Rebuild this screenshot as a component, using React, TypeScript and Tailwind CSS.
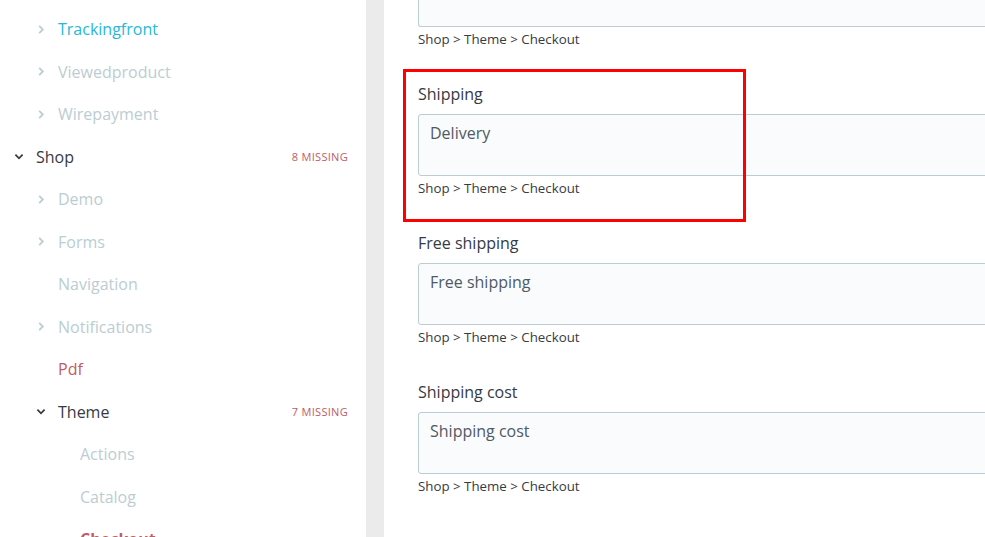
import React from "react";

type Item = {
  label: string;
  level: number;
  chevron?: "right" | "down";
  tone: "blue" | "muted" | "dark" | "red" | "active";
  missing?: string;
};

const ITEMS: Item[] = [
  { label: "Trackingfront", level: 1, chevron: "right", tone: "blue" },
  { label: "Viewedproduct", level: 1, chevron: "right", tone: "muted" },
  { label: "Wirepayment", level: 1, chevron: "right", tone: "muted" },
  { label: "Shop", level: 0, chevron: "down", tone: "dark", missing: "8 missing" },
  { label: "Demo", level: 1, chevron: "right", tone: "muted" },
  { label: "Forms", level: 1, chevron: "right", tone: "muted" },
  { label: "Navigation", level: 1, tone: "muted" },
  { label: "Notifications", level: 1, chevron: "right", tone: "muted" },
  { label: "Pdf", level: 1, tone: "red" },
  { label: "Theme", level: 1, chevron: "down", tone: "dark", missing: "7 missing" },
  { label: "Actions", level: 2, tone: "muted" },
  { label: "Catalog", level: 2, tone: "muted" },
  { label: "Checkout", level: 2, tone: "active" },
];

const TONE: Record<Item["tone"], string> = {
  blue: "text-[#25b9d7]",
  muted: "text-[#bbcdd2]",
  dark: "text-[#363a41]",
  red: "text-[#c05c67]",
  active: "text-[#c05c67] font-bold",
};

const INDENT = ["pl-[14px]", "pl-[36px]", "pl-[80px]"];

function Chevron({ dir, dark }: { dir: "right" | "down"; dark: boolean }) {
  return (
    <svg
      width="11"
      height="11"
      viewBox="0 0 10 10"
      className={dark ? "text-[#363a41]" : "text-[#bbcdd2]"}
    >
      {dir === "right" ? (
        <path d="M3.2 1.4 L6.8 5 L3.2 8.6" fill="none" stroke="currentColor" strokeWidth="1.8" />
      ) : (
        <path d="M1.4 3.2 L5 6.8 L8.6 3.2" fill="none" stroke="currentColor" strokeWidth="1.8" />
      )}
    </svg>
  );
}

function SideRow({ item }: { item: Item }) {
  return (
    <div className={`flex h-[42.5px] shrink-0 items-center pr-[18px] ${INDENT[item.level]}`}>
      {item.chevron && (
        <div className="mr-[12px] flex w-[10px] items-center justify-center">
          <Chevron dir={item.chevron} dark={item.chevron === "down"} />
        </div>
      )}
      {!item.chevron && item.level === 1 && <div className="w-[22px]" />}
      <span className={`text-[16px] leading-none ${TONE[item.tone]}`}>{item.label}</span>
      {item.missing && (
        <span className="ml-auto text-[11px] uppercase tracking-[0.3px] text-[#c05c67]">
          {item.missing}
        </span>
      )}
    </div>
  );
}

const HELP = "Shop > Theme > Checkout";

function Field({ label, value }: { label: string; value: string }) {
  return (
    <div className="mt-[33px]">
      <div className="h-[24px] text-[16px] leading-[24px] text-[#363a41]">{label}</div>
      <div className="mt-[8px] h-[62px] w-[640px] rounded-[3px] border border-[#bbcdd2] bg-[#fafbfc] px-[11px] pt-[6px] text-[16px] leading-[24px] text-[#505a63]">
        {value}
      </div>
      <div className="mt-[2px] h-[20px] text-[13.3px] leading-[20px] text-[#363a41]">{HELP}</div>
    </div>
  );
}

export default function App() {
  return (
    <div
      className="flex h-[537px] w-[985px] overflow-hidden bg-white"
      style={{ fontFamily: '"Open Sans", "Noto Sans", sans-serif' }}
    >
      {/* sidebar tree */}
      <aside className="flex w-[366px] shrink-0 flex-col overflow-hidden bg-white pt-[8px]">
        {ITEMS.map((it) => (
          <SideRow key={it.label} item={it} />
        ))}
      </aside>

      {/* splitter */}
      <div className="w-[18px] shrink-0 bg-[#ebebeb]" />

      {/* form, scrolled: previous field's textarea is clipped at the top */}
      <main className="relative flex-1 overflow-hidden pl-[34px]">
        <div className="h-[27px] w-[640px] rounded-b-[3px] border border-t-0 border-[#bbcdd2] bg-[#fafbfc]" />
        <div className="mt-[2px] h-[20px] text-[13.3px] leading-[20px] text-[#363a41]">{HELP}</div>
        <Field label="Shipping" value="Delivery" />
        <Field label="Free shipping" value="Free shipping" />
        <Field label="Shipping cost" value="Shipping cost" />

        {/* highlight box */}
        <div className="pointer-events-none absolute left-[19px] top-[69px] h-[153px] w-[343px] border-[3px] border-[#ff0000]" />
      </main>
    </div>
  );
}
